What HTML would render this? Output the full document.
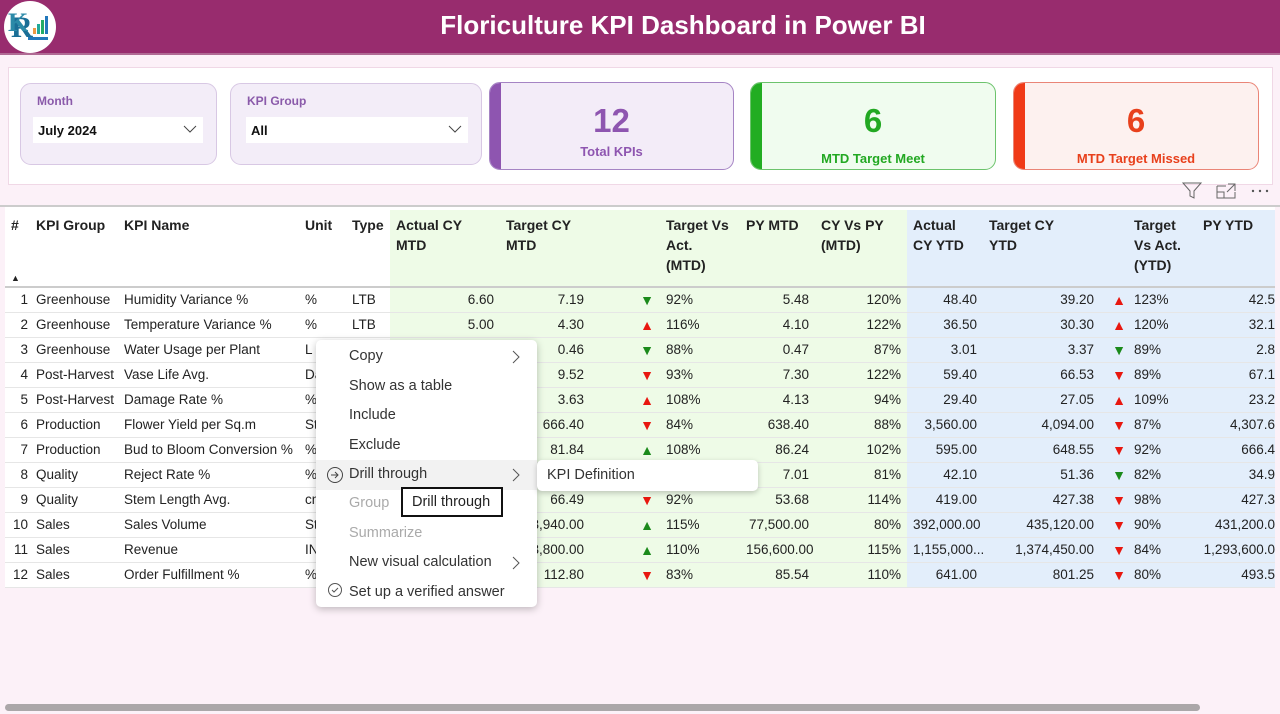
<!DOCTYPE html>
<html><head><meta charset="utf-8">
<style>
*{box-sizing:border-box;margin:0;padding:0}
body{width:1280px;height:714px;overflow:hidden;background:#fcf1f8;font-family:"Liberation Sans",sans-serif;position:relative;color:#222}
.hdr{position:absolute;left:0;top:0;width:1280px;height:55px;background:#982c6e;border-bottom:2px solid #b06a94}
.hdr h1{position:absolute;left:0;width:1366px;top:10px;text-align:center;color:#fff;font-size:26px;font-weight:bold}
.logo{position:absolute;left:4px;top:1px;width:52px;height:52px;border-radius:50%;background:#fff}
.panel{position:absolute;left:8px;top:67px;width:1265px;height:118px;background:#fff;border:1px solid #f0d8e6}
.sl{position:absolute;top:83px;height:82px;background:#f3edf8;border:1px solid #d8c8e4;border-radius:11px}
.sl .lb{position:absolute;left:16px;top:10px;font-size:12px;font-weight:bold;color:#8a5aaa}
.sl .dd{position:absolute;left:12px;top:33px;height:26px;background:#fff;font-size:13px;font-weight:bold;padding:6px 5px;color:#111}
.sl .dd svg{position:absolute;right:6px;top:8px}
.card{position:absolute;top:82px;height:88px;border-radius:11px;border:1px solid;overflow:hidden;text-align:center}
.card .bar{position:absolute;left:0;top:0;bottom:0;width:11px}
.card .n{position:absolute;left:0;right:0;top:19px;font-size:33px;font-weight:bold}
.card .t{position:absolute;left:0;right:0;top:61px;font-size:13px;font-weight:bold}
table{position:absolute;left:5px;top:210px;width:1270px;border-collapse:collapse;table-layout:fixed;font-size:13.5px}
td{height:25px;border-bottom:1px solid #e6e6e6;white-space:nowrap;overflow:hidden;padding:0 6px}
th{height:77px;vertical-align:top;text-align:left;font-size:14px;font-weight:bold;padding:5px 6px;line-height:20px;border-bottom:2px solid #ccc;position:relative;white-space:nowrap;overflow:hidden}
.g{background:#eefbe7}.b{background:#e3eefb}
.r{text-align:right}
.up{color:#e8170f;font-size:14px}.dn{color:#e8170f;font-size:14px}.gu{color:#1b8a1b;font-size:14px}
tr.w td:not(.g):not(.b){background:#fff}
.menu{position:absolute;left:316px;top:340px;width:221px;height:267px;background:#fff;border-radius:5px;box-shadow:0 2px 8px rgba(0,0,0,.25);font-size:14.5px;color:#333}
.mi{position:absolute;left:33px}
.gr{color:#aaa}
.sub{position:absolute;left:537px;top:460px;width:221px;height:31px;background:#fff;border-radius:5px;box-shadow:0 2px 6px rgba(0,0,0,.22);font-size:14.5px;color:#333;padding:7px 10px}
.tip{position:absolute;left:401px;top:487px;width:102px;height:30px;background:#fff;border:2px solid #111;font-size:14.5px;color:#222;padding:5px 9px}
</style></head><body>
<div class="hdr"><div class="logo"><svg width="52" height="52" viewBox="0 0 52 52"><text x="7" y="36" font-size="30" font-family="Liberation Serif" font-weight="bold" fill="#1b6e96">R</text><text x="4" y="30" font-size="26" font-family="Liberation Serif" font-weight="bold" fill="#2c8aa8">K</text><rect x="29" y="27" width="3" height="6" fill="#e94"/><rect x="33" y="23" width="3" height="10" fill="#2a9"/><rect x="37" y="19" width="3" height="14" fill="#2a6"/><rect x="41" y="15" width="3" height="18" fill="#27b"/><rect x="24" y="36" width="20" height="3" fill="#27b"/></svg></div><h1>Floriculture KPI Dashboard in Power BI</h1></div>
<div class="panel"></div>
<div class="sl" style="left:20px;width:197px"><div class="lb">Month</div><div class="dd" style="width:170px">July 2024<svg width="14" height="8"><path d="M1 1 L7 7 L13 1" stroke="#444" fill="none"/></svg></div></div>
<div class="sl" style="left:230px;width:252px"><div class="lb">KPI Group</div><div class="dd" style="width:222px;left:15px">All<svg width="14" height="8"><path d="M1 1 L7 7 L13 1" stroke="#444" fill="none"/></svg></div></div>
<div class="card" style="left:489px;width:245px;background:#f3ecf8;border-color:#a584c4"><div class="bar" style="background:#8e55b0"></div><div class="n" style="color:#8e55b0">12</div><div class="t" style="color:#8e55b0">Total KPIs</div></div>
<div class="card" style="left:750px;width:246px;background:#f0fcef;border-color:#6cc36c"><div class="bar" style="background:#22ad22"></div><div class="n" style="color:#22a822">6</div><div class="t" style="color:#22a822;top:68px">MTD Target Meet</div></div>
<div class="card" style="left:1013px;width:246px;background:#fdf1ef;border-color:#ea8577"><div class="bar" style="background:#f03a17"></div><div class="n" style="color:#e8401c">6</div><div class="t" style="color:#e8401c;top:68px">MTD Target Missed</div></div>
<svg style="position:absolute;left:1182px;top:181px" width="90" height="20"><path d="M1 2 H19 L12 10 V17 L8 15 V10 Z" stroke="#666" fill="none"/><path d="M35 5 H44 M35 5 V17 H53 V11 M35 11 H42 V17 M46 3 H53 V10 M53 3 L45 11" stroke="#666" fill="none"/><circle cx="71" cy="10" r="1.2" fill="#555"/><circle cx="78" cy="10" r="1.2" fill="#555"/><circle cx="85" cy="10" r="1.2" fill="#555"/></svg>
<div style="position:absolute;left:0;top:205px;width:1280px;height:2px;background:#ccc"></div>
<div style="position:absolute;left:5px;top:207px;width:1270px;height:380px;background:#fff"></div>
<table>
<colgroup><col style="width:25px"><col style="width:88px"><col style="width:181px"><col style="width:47px"><col style="width:44px"><col style="width:110px"><col style="width:90px"><col style="width:70px"><col style="width:80px"><col style="width:75px"><col style="width:92px"><col style="width:76px"><col style="width:117px"><col style="width:28px"><col style="width:69px"><col style="width:78px"></colgroup>
<tr><th style="padding-left:6px">#<span style="position:absolute;left:6px;top:58px;font-size:9px">▲</span></th><th>KPI Group</th><th>KPI Name</th><th>Unit</th><th>Type</th><th class="g">Actual CY<br>MTD</th><th class="g">Target CY<br>MTD</th><th class="g"></th><th class="g">Target Vs<br>Act.<br>(MTD)</th><th class="g">PY MTD</th><th class="g">CY Vs PY<br>(MTD)</th><th class="b">Actual<br>CY YTD</th><th class="b">Target CY<br>YTD</th><th class="b"></th><th class="b">Target<br>Vs Act.<br>(YTD)</th><th class="b">PY YTD</th></tr>
<tr class="w"><td class="r" style="padding:0 2px">1</td><td>Greenhouse</td><td>Humidity Variance %</td><td>%</td><td>LTB</td><td class="g r">6.60</td><td class="g r">7.19</td><td class="g r"><span class="gu">▼</span></td><td class="g">92%</td><td class="g r">5.48</td><td class="g r">120%</td><td class="b r">48.40</td><td class="b r">39.20</td><td class="b r" style="padding:0 2px"><span class="up">▲</span></td><td class="b">123%</td><td class="b r" style="padding:0">42.5</td></tr>
<tr class="w"><td class="r" style="padding:0 2px">2</td><td>Greenhouse</td><td>Temperature Variance %</td><td>%</td><td>LTB</td><td class="g r">5.00</td><td class="g r">4.30</td><td class="g r"><span class="up">▲</span></td><td class="g">116%</td><td class="g r">4.10</td><td class="g r">122%</td><td class="b r">36.50</td><td class="b r">30.30</td><td class="b r" style="padding:0 2px"><span class="up">▲</span></td><td class="b">120%</td><td class="b r" style="padding:0">32.1</td></tr>
<tr class="w"><td class="r" style="padding:0 2px">3</td><td>Greenhouse</td><td>Water Usage per Plant</td><td>L</td><td>HTB</td><td class="g r">0.41</td><td class="g r">0.46</td><td class="g r"><span class="gu">▼</span></td><td class="g">88%</td><td class="g r">0.47</td><td class="g r">87%</td><td class="b r">3.01</td><td class="b r">3.37</td><td class="b r" style="padding:0 2px"><span class="gu">▼</span></td><td class="b">89%</td><td class="b r" style="padding:0">2.8</td></tr>
<tr class="w"><td class="r" style="padding:0 2px">4</td><td>Post-Harvest</td><td>Vase Life Avg.</td><td>Days</td><td>HTB</td><td class="g r">8.90</td><td class="g r">9.52</td><td class="g r"><span class="dn">▼</span></td><td class="g">93%</td><td class="g r">7.30</td><td class="g r">122%</td><td class="b r">59.40</td><td class="b r">66.53</td><td class="b r" style="padding:0 2px"><span class="dn">▼</span></td><td class="b">89%</td><td class="b r" style="padding:0">67.1</td></tr>
<tr class="w"><td class="r" style="padding:0 2px">5</td><td>Post-Harvest</td><td>Damage Rate %</td><td>%</td><td>LTB</td><td class="g r">3.90</td><td class="g r">3.63</td><td class="g r"><span class="up">▲</span></td><td class="g">108%</td><td class="g r">4.13</td><td class="g r">94%</td><td class="b r">29.40</td><td class="b r">27.05</td><td class="b r" style="padding:0 2px"><span class="up">▲</span></td><td class="b">109%</td><td class="b r" style="padding:0">23.2</td></tr>
<tr class="w"><td class="r" style="padding:0 2px">6</td><td>Production</td><td>Flower Yield per Sq.m</td><td>Stems</td><td>HTB</td><td class="g r">560.00</td><td class="g r">666.40</td><td class="g r"><span class="dn">▼</span></td><td class="g">84%</td><td class="g r">638.40</td><td class="g r">88%</td><td class="b r">3,560.00</td><td class="b r">4,094.00</td><td class="b r" style="padding:0 2px"><span class="dn">▼</span></td><td class="b">87%</td><td class="b r" style="padding:0">4,307.6</td></tr>
<tr class="w"><td class="r" style="padding:0 2px">7</td><td>Production</td><td>Bud to Bloom Conversion %</td><td>%</td><td>HTB</td><td class="g r">88.00</td><td class="g r">81.84</td><td class="g r"><span class="gu">▲</span></td><td class="g">108%</td><td class="g r">86.24</td><td class="g r">102%</td><td class="b r">595.00</td><td class="b r">648.55</td><td class="b r" style="padding:0 2px"><span class="dn">▼</span></td><td class="b">92%</td><td class="b r" style="padding:0">666.4</td></tr>
<tr class="w"><td class="r" style="padding:0 2px">8</td><td>Quality</td><td>Reject Rate %</td><td>%</td><td>LTB</td><td class="g r">5.70</td><td class="g r">7.01</td><td class="g r"><span class="gu">▼</span></td><td class="g">81%</td><td class="g r">7.01</td><td class="g r">81%</td><td class="b r">42.10</td><td class="b r">51.36</td><td class="b r" style="padding:0 2px"><span class="gu">▼</span></td><td class="b">82%</td><td class="b r" style="padding:0">34.9</td></tr>
<tr class="w"><td class="r" style="padding:0 2px">9</td><td>Quality</td><td>Stem Length Avg.</td><td>cm</td><td>HTB</td><td class="g r">61.20</td><td class="g r">66.49</td><td class="g r"><span class="dn">▼</span></td><td class="g">92%</td><td class="g r">53.68</td><td class="g r">114%</td><td class="b r">419.00</td><td class="b r">427.38</td><td class="b r" style="padding:0 2px"><span class="dn">▼</span></td><td class="b">98%</td><td class="b r" style="padding:0">427.3</td></tr>
<tr class="w"><td class="r" style="padding:0 2px">10</td><td>Sales</td><td>Sales Volume</td><td>Stems</td><td>HTB</td><td class="g r">62,000.00</td><td class="g r">53,940.00</td><td class="g r"><span class="gu">▲</span></td><td class="g">115%</td><td class="g r">77,500.00</td><td class="g r">80%</td><td class="b r">392,000.00</td><td class="b r">435,120.00</td><td class="b r" style="padding:0 2px"><span class="dn">▼</span></td><td class="b">90%</td><td class="b r" style="padding:0">431,200.0</td></tr>
<tr class="w"><td class="r" style="padding:0 2px">11</td><td>Sales</td><td>Revenue</td><td>INR</td><td>HTB</td><td class="g r">180,000.00</td><td class="g r">163,800.00</td><td class="g r"><span class="gu">▲</span></td><td class="g">110%</td><td class="g r">156,600.00</td><td class="g r">115%</td><td class="b r">1,155,000...</td><td class="b r">1,374,450.00</td><td class="b r" style="padding:0 2px"><span class="dn">▼</span></td><td class="b">84%</td><td class="b r" style="padding:0">1,293,600.0</td></tr>
<tr class="w"><td class="r" style="padding:0 2px">12</td><td>Sales</td><td>Order Fulfillment %</td><td>%</td><td>HTB</td><td class="g r">94.00</td><td class="g r">112.80</td><td class="g r"><span class="dn">▼</span></td><td class="g">83%</td><td class="g r">85.54</td><td class="g r">110%</td><td class="b r">641.00</td><td class="b r">801.25</td><td class="b r" style="padding:0 2px"><span class="dn">▼</span></td><td class="b">80%</td><td class="b r" style="padding:0">493.5</td></tr>
</table>
<div class="menu">
<div class="mi" style="top:8px">Copy</div><svg style="position:absolute;left:196px;top:10px" width="8" height="14"><path d="M1 1 L7 7 L1 13" stroke="#555" fill="none"/></svg>
<div class="mi" style="top:38px">Show as a table</div>
<div class="mi" style="top:67px">Include</div>
<div class="mi" style="top:97px">Exclude</div>
<div style="position:absolute;left:0;top:120px;width:221px;height:30px;background:#f2f2f2"></div>
<svg style="position:absolute;left:10px;top:126px" width="18" height="18"><circle cx="9" cy="9" r="7.5" stroke="#444" fill="none"/><path d="M5 9 H12 M9 6 L12 9 L9 12" stroke="#444" fill="none"/></svg>
<div class="mi" style="top:126px">Drill through</div><svg style="position:absolute;left:196px;top:128px" width="8" height="14"><path d="M1 1 L7 7 L1 13" stroke="#555" fill="none"/></svg>
<div class="mi gr" style="top:155px">Group</div>
<div class="mi gr" style="top:185px">Summarize</div>
<div class="mi" style="top:214px">New visual calculation</div><svg style="position:absolute;left:196px;top:216px" width="8" height="14"><path d="M1 1 L7 7 L1 13" stroke="#555" fill="none"/></svg>
<svg style="position:absolute;left:11px;top:242px" width="16" height="16"><circle cx="8" cy="8" r="6.5" stroke="#555" fill="none"/><path d="M5 8 L7 10 L11 6" stroke="#555" fill="none"/></svg>
<div class="mi" style="top:244px">Set up a verified answer</div>
</div>
<div class="sub">KPI Definition</div>
<div class="tip">Drill through</div>
<div style="position:absolute;left:5px;top:704px;width:1195px;height:7px;background:#aba7a9;border-radius:4px"></div>
</body></html>
